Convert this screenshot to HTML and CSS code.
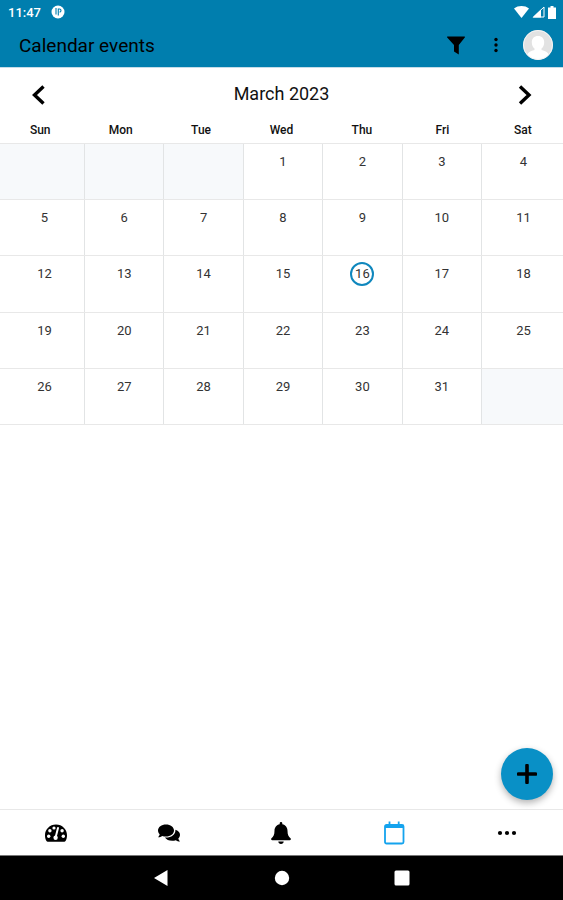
FILE: index.html
```html
<!DOCTYPE html>
<html lang="en">
<head>
    <meta charset="UTF-8">
    <meta name="viewport" content="width=device-width, initial-scale=1.0">
    <title>Calendar events</title>
    <link rel="stylesheet" href="styles.css">
</head>
<body>
    <header class="header">
        <div class="status-bar">
            <span class="clock">11:47</span>
            <svg class="status-app" width="14" height="14" viewBox="0 0 14 14">
                <circle cx="7" cy="7" r="6.5" fill="#fff"/>
                <path d="M5 3v6.500M7.300 10.500V4h1.200a1.500 1.500 0 0 1 0 3" fill="none" stroke="#007eae" stroke-width="1.100"/>
            </svg>
            <div class="status-icons">
                <svg width="15" height="12" viewBox="0 0 15 12"><path d="M0 2.500C4-.8 11-.8 15 2.500L7.500 12z" fill="#fff"/></svg>
                <svg width="13" height="12" viewBox="0 0 13 12"><path d="M12 1v10H1.500z" fill="none" stroke="#fff"/><path d="M9 3.500v8H.5z" fill="#fff"/></svg>
                <svg width="8" height="13" viewBox="0 0 8 13"><path d="M2.500 0h3v1.500H8V13H0V1.500h2.500z" fill="#fff"/></svg>
            </div>
        </div>
        <div class="toolbar">
            <h1 class="title">Calendar events</h1>
            <button type="button" class="icon-btn" aria-label="Filter">
                <svg width="18" height="19" viewBox="0 0 18 19"><path d="M.4.500h17.200c.4 0 .5.600.2 1L11.800 9v9.500L7 15.500V9L.2 1.500C-.1 1.100 0 .5.4.5z"/></svg>
            </button>
            <button type="button" class="icon-btn" aria-label="More options">
                <svg width="6" height="18" viewBox="0 0 6 18"><circle cx="3" cy="3.500" r="1.700"/><circle cx="3" cy="9" r="1.700"/><circle cx="3" cy="14.500" r="1.700"/></svg>
            </button>
            <button type="button" class="avatar" aria-label="Account">
                <svg width="30" height="30" viewBox="0 0 30 30">
                    <circle cx="15" cy="15" r="15" fill="#e2e2e2"/>
                    <path d="M15 6c4 0 6.200 2.600 6.200 6.200 0 2.800-1 5-2.700 6.300v1.500c3.500 1.200 6.500 2 7.300 4.500C23 28 19 29.500 15 29.500S7 28 4.200 24.500C5 22 8 21.200 11.500 20v-1.500c-1.700-1.300-2.700-3.500-2.700-6.300C8.800 8.600 11 6 15 6z" fill="#fff"/>
                    <circle cx="15" cy="15" r="14.500" fill="none" stroke="#f2f4f5"/>
                </svg>
            </button>
        </div>
    </header>

    <main class="content">
        <div class="month-nav">
            <button type="button" class="icon-btn" aria-label="Previous month">
                <svg width="14" height="20" viewBox="0 0 14 20"><path d="M12.500 1.500L3.500 10l9 8.500" fill="none" stroke="#000" stroke-width="3.400"/></svg>
            </button>
            <h2 class="month">March 2023</h2>
            <button type="button" class="icon-btn" aria-label="Next month">
                <svg width="14" height="20" viewBox="0 0 14 20"><path d="M2 1.500L11 10l-9 8.500" fill="none" stroke="#000" stroke-width="3.400"/></svg>
            </button>
        </div>

        <table class="calendar">
            <thead>
                <tr><th>Sun</th><th>Mon</th><th>Tue</th><th>Wed</th><th>Thu</th><th>Fri</th><th>Sat</th></tr>
            </thead>
            <tbody>
                <tr><td class="empty"></td><td class="empty"></td><td class="empty"></td><td><span>1</span></td><td><span>2</span></td><td><span>3</span></td><td><span>4</span></td></tr>
                <tr><td><span>5</span></td><td><span>6</span></td><td><span>7</span></td><td><span>8</span></td><td><span>9</span></td><td><span>10</span></td><td><span>11</span></td></tr>
                <tr><td><span>12</span></td><td><span>13</span></td><td><span>14</span></td><td><span>15</span></td><td><span class="today">16</span></td><td><span>17</span></td><td><span>18</span></td></tr>
                <tr><td><span>19</span></td><td><span>20</span></td><td><span>21</span></td><td><span>22</span></td><td><span>23</span></td><td><span>24</span></td><td><span>25</span></td></tr>
                <tr><td><span>26</span></td><td><span>27</span></td><td><span>28</span></td><td><span>29</span></td><td><span>30</span></td><td><span>31</span></td><td class="empty"></td></tr>
            </tbody>
        </table>

        <button type="button" class="fab" aria-label="New event">
            <svg width="20" height="20" viewBox="0 0 20 20"><path d="M10 1.500v17M1.500 10h17" stroke="#000" stroke-width="3.600" stroke-linecap="round"/></svg>
        </button>
    </main>

    <nav class="tabs">
        <a href="#" class="tab" aria-label="Dashboard">
            <svg width="24" height="24" viewBox="0 0 24 24">
                <path d="M12 3.500C5.800 3.500 1 8.300 1 14.300c0 2 .4 3.900 1.300 5.500.4.600.9.900 1.500.9h16.400c.6 0 1.100-.3 1.500-.9.900-1.600 1.300-3.500 1.300-5.500 0-6-4.800-10.800-11-10.800z"/>
                <path d="M14 7l-2.300 9" stroke="#fff" stroke-width="2" stroke-linecap="round"/>
                <g fill="#fff"><circle cx="11.600" cy="16.800" r="2.200"/><circle cx="10" cy="7" r="1.600"/><circle cx="5.900" cy="9.800" r="1.700"/><circle cx="4.700" cy="15.300" r="1.700"/><circle cx="18.100" cy="9.800" r="1.700"/><circle cx="19.300" cy="15.300" r="1.700"/></g>
            </svg>
        </a>
        <a href="#" class="tab" aria-label="Messages">
            <svg width="24" height="24" viewBox="0 0 24 24">
                <path d="M9 3.500c4.500 0 8 2.600 8 6s-3.500 6-8 6c-1.300 0-2.600-.2-3.700-.6-1.200.8-2.500 1.300-4.200 1.300.9-.9 1.400-1.900 1.600-2.900C1.600 12.300 1 11 1 9.500c0-3.400 3.500-6 8-6z"/>
                <path d="M18.300 8.800c2.800.8 4.700 2.700 4.700 5 0 1.400-.6 2.700-1.700 3.700.2 1 .8 2.100 1.700 3-1.700 0-3.100-.5-4.200-1.300-1.100.4-2.300.6-3.600.6-3.300 0-6-1.300-7.300-3.300.4.100.8.100 1.200.1 5.200 0 9.300-3.200 9.300-7.100z"/>
            </svg>
        </a>
        <a href="#" class="tab" aria-label="Notifications">
            <svg width="24" height="24" viewBox="0 0 24 24">
                <path d="M12 1c.8 0 1.300.6 1.300 1.300v.9c3.200.6 5.200 3.300 5.200 6.500 0 4 1.200 6 3 7.600.8.700.3 2-.8 2H3.300c-1.100 0-1.600-1.300-.8-2 1.800-1.600 3-3.600 3-7.600 0-3.200 2-5.900 5.200-6.500v-.9C10.700 1.600 11.200 1 12 1zM9.300 20.500h5.400c0 1.500-1.200 2.500-2.700 2.500s-2.700-1-2.700-2.500z"/>
            </svg>
        </a>
        <a href="#" class="tab active" aria-label="Calendar">
            <svg width="24" height="24" viewBox="0 0 24 24">
                <rect x="3" y="4" width="18.500" height="18.500" rx="1.500" fill="none" stroke="currentColor" stroke-width="1.800"/>
                <path d="M3 4h18.500v3H3zM6.600.5h1.800V4H6.600zM15.800.5h1.800V4h-1.800z" fill="currentColor"/>
            </svg>
        </a>
        <a href="#" class="tab" aria-label="More">
            <svg width="20" height="6" viewBox="0 0 20 6"><circle cx="3" cy="3" r="2.100"/><circle cx="10" cy="3" r="2.100"/><circle cx="17" cy="3" r="2.100"/></svg>
        </a>
    </nav>

    <div class="system-nav">
        <button type="button" class="icon-btn" aria-label="Back">
            <svg width="16" height="18" viewBox="0 0 16 18"><path d="M13.500 1v16L0 9z" fill="#fff"/></svg>
        </button>
        <button type="button" class="icon-btn" aria-label="Home">
            <svg width="16" height="16" viewBox="0 0 16 16"><circle cx="8" cy="8" r="7.200" fill="#fff"/></svg>
        </button>
        <button type="button" class="icon-btn" aria-label="Recent apps">
            <svg width="16" height="16" viewBox="0 0 16 16"><rect x=".5" y=".5" width="15" height="15" rx="1.500" fill="#fff"/></svg>
        </button>
    </div>
</body>
</html>
```
FILE: styles.css
```css
* {
    box-sizing: border-box;
}
body {
    margin: 0;
    min-height: 100vh;
    display: flex;
    flex-direction: column;
    font-family: Roboto, sans-serif;
    background-color: #fff;
    color: #111;
}
button {
    border: none;
    padding: 0;
    background: none;
    cursor: pointer;
}
svg {
    display: block;
}
.icon-btn {
    display: flex;
    align-items: center;
    justify-content: center;
    width: 40px;
    height: 40px;
}

/* Header */
.header {
    height: 68px;
    background-color: #007eae;
    border-bottom: 1px solid #c5dce8;
}
.status-bar {
    display: flex;
    align-items: center;
    height: 24px;
    padding: 0 7px 0 8px;
}
.clock {
    color: #fff;
    font-size: 13px;
    font-weight: 500;
}
.status-app {
    margin-left: 10px;
}
.status-icons {
    display: flex;
    align-items: center;
    gap: 3px;
    margin-left: auto;
}
.toolbar {
    display: flex;
    align-items: center;
    height: 42px;
    padding: 0 10px 0 19px;
}
.title {
    flex: 1;
    margin: 0;
    color: #000;
    font-size: 19px;
    font-weight: 400;
}
.avatar {
    margin-left: 7px;
    border-radius: 50%;
}

/* Calendar */
.content {
    flex: 1;
    position: relative;
}
.month-nav {
    display: flex;
    align-items: center;
    justify-content: space-between;
    height: 54px;
    padding: 0 18px;
}
.month {
    margin: 0;
    font-size: 18px;
    font-weight: 400;
    line-height: 20px;
    padding-bottom: 2px;
}
.calendar {
    display: block;
}
.calendar thead,
.calendar tr {
    display: grid;
}
.calendar thead tr {
    grid-template-columns: repeat(7, 1fr);
    border-bottom: 1px solid #e8e8e8;
}
.calendar th {
    padding: 0 0 5px;
    font-size: 12px;
    font-weight: 500;
    line-height: 16px;
}
.calendar tbody {
    display: grid;
    grid-template-rows: repeat(5, 1fr);
    height: 281px;
}
.calendar tbody tr {
    grid-template-columns: 85px repeat(5, 1fr) 81px;
    border-bottom: 1px solid #e8e8e8;
}
.calendar td {
    display: flex;
    justify-content: center;
    padding: 6px 0 0;
    border-right: 1px solid #e2e4e5;
    color: #333;
    font-size: 13px;
}
.calendar td:first-child {
    padding-left: 5px;
}
.calendar td:last-child {
    padding-left: 2px;
    border-right: none;
}
.calendar td span {
    width: 24px;
    height: 24px;
    line-height: 24px;
    text-align: center;
}
.calendar .empty {
    background-color: #f7f9fb;
}
.calendar td .today {
    border: 2px solid #0f87bd;
    border-radius: 50%;
    line-height: 20px;
}
.fab {
    position: absolute;
    right: 10px;
    bottom: 9px;
    display: flex;
    align-items: center;
    justify-content: center;
    width: 52px;
    height: 52px;
    border-radius: 50%;
    background-color: #0990c6;
    box-shadow: 0 3px 7px rgba(0, 0, 0, 0.3);
}

/* Bottom bars */
.tabs {
    display: flex;
    height: 46px;
    border-top: 1px solid #e8e8e8;
}
.tab {
    flex: 1;
    display: flex;
    align-items: center;
    justify-content: center;
    color: #111;
}
.tab.active {
    color: #14a3ee;
}
.system-nav {
    display: flex;
    align-items: center;
    justify-content: center;
    gap: 80px;
    height: 45px;
    background-color: #000;
    border-top: 1px solid #777;
}
```
